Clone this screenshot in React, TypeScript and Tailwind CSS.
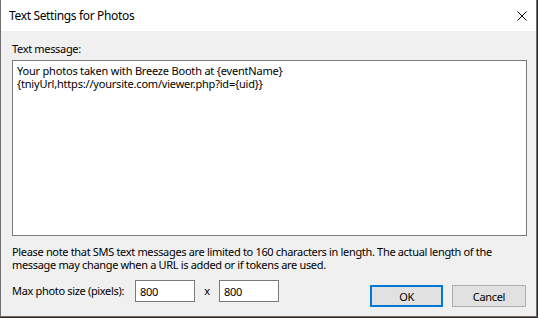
import React from "react"

// ── Title bar ──────────────────────────────────────────────

function TitleBar({ title }: { title: string }) {
  return (
    <div className="flex h-[31px] shrink-0 items-center bg-white pl-[8px] pr-[9px]">
      <span className="text-[12px] leading-none tracking-[-0.35px] text-black">{title}</span>
      <button type="button" className="ml-auto flex h-[10px] w-[10px] items-center justify-center" title="Close">
        <svg width="10" height="10" viewBox="0 0 10 10" fill="none">
          <path d="M0.5 0.5L9.5 9.5M9.5 0.5L0.5 9.5" stroke="#000" strokeWidth="1" />
        </svg>
      </button>
    </div>
  )
}

// ── Dialog ─────────────────────────────────────────────────

const defaultMessage =
  "Your photos taken with Breeze Booth at {eventName}\n{tniyUrl,https://yoursite.com/viewer.php?id={uid}}"

export default function App() {
  return (
    <div
      className="h-[318px] w-[538px] bg-[#2d2a26]"
      style={{ fontFamily: '"Noto Sans", "Open Sans", sans-serif' }}
    >
      <div className="flex h-[317px] w-[537px] flex-col border-x border-b border-[#6f6f6f] bg-[#f0f0f0]">
        <TitleBar title="Text Settings for Photos" />

        <div className="flex flex-1 flex-col pl-[11px] pr-[9px] pt-[11px] text-[11px] leading-[13px] tracking-[-0.33px] text-black">
          <label htmlFor="msg">Text message:</label>
          <textarea
            id="msg"
            defaultValue={defaultMessage}
            className="mt-[5px] h-[176px] w-[515px] resize-none border border-[#7a7a7a] bg-white px-[4px] py-[3px] text-[11px] leading-[13px] tracking-[-0.2px] outline-none"
          />

          <p className="mt-[9px] w-[515px]">
            Please note that SMS text messages are limited to 160 characters in length. The actual length of the
            message may change when a URL is added or if tokens are used.
          </p>

          <div className="mt-[9px] flex items-start">
            <span className="w-[123px] shrink-0 whitespace-nowrap leading-[22px]">Max photo size (pixels):</span>
            <input
              defaultValue="800"
              className="h-[22px] w-[60px] shrink-0 border border-[#7a7a7a] bg-white px-[4px] text-[11px] outline-none"
            />
            <span className="w-[24px] shrink-0 text-center leading-[22px]">x</span>
            <input
              defaultValue="800"
              className="h-[22px] w-[60px] shrink-0 border border-[#7a7a7a] bg-white px-[4px] text-[11px] outline-none"
            />

            <div className="ml-auto mr-[1px] mt-[5px] flex shrink-0 gap-[9px]">
              <button
                type="button"
                className="h-[22px] w-[73px] border-2 border-[#0078d7] bg-[#e1e1e1] text-[11px]"
              >
                OK
              </button>
              <button
                type="button"
                className="h-[22px] w-[74px] border border-[#adadad] bg-[#e1e1e1] text-[11px]"
              >
                Cancel
              </button>
            </div>
          </div>
        </div>
      </div>
    </div>
  )
}
